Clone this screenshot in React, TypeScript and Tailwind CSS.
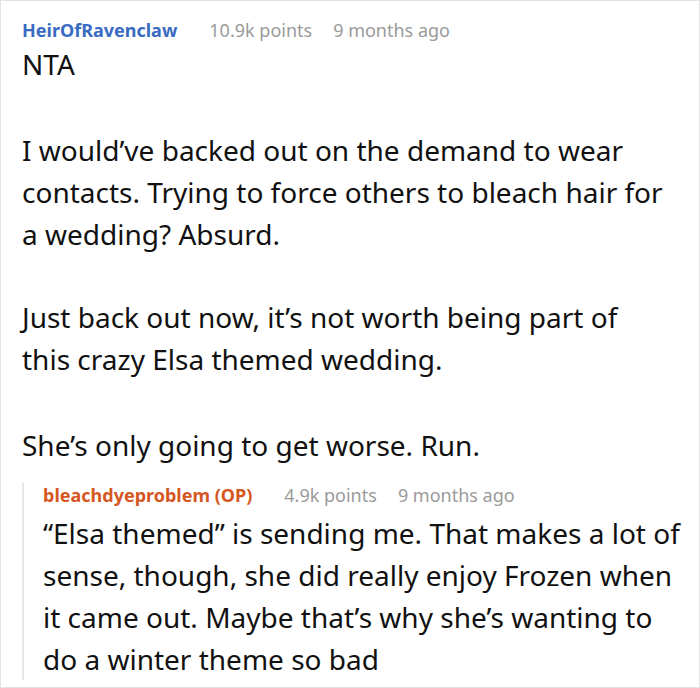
type Comment = {
  author: string;
  points: string;
  age: string;
  paragraphs: string[];
};

const topComment: Comment = {
  author: 'HeirOfRavenclaw',
  points: '10.9k points',
  age: '9 months ago',
  paragraphs: [
    'NTA',
    'I would’ve backed out on the demand to wear contacts. Trying to force others to bleach hair for a wedding? Absurd.',
    'Just back out now, it’s not worth being part of this crazy Elsa themed wedding.',
    'She’s only going to get worse. Run.',
  ],
};

const reply: Comment = {
  author: 'bleachdyeproblem (OP)',
  points: '4.9k points',
  age: '9 months ago',
  paragraphs: [
    '“Elsa themed” is sending me. That makes a lot of sense, though, she did really enjoy Frozen when it came out. Maybe that’s why she’s wanting to do a winter theme so bad',
  ],
};

const gaps = ['mt-[1px]', 'mt-[44px]', 'mt-[41px]', 'mt-[44px]'];

function CommentMeta({ author, points, age, authorClass }: { author: string; points: string; age: string; authorClass: string }) {
  return (
    <div className="flex items-baseline text-[18px] leading-[24px]">
      <span className={`font-bold ${authorClass}`}>{author}</span>
      <span className="ml-[32px] text-[#9a9a9a]">{points}</span>
      <span className="ml-[21px] text-[#9a9a9a]">{age}</span>
    </div>
  );
}

export default function App() {
  return (
    <div
      className="h-[688px] w-[700px] overflow-hidden border border-[#e3e3e3] bg-white pl-[21px] pr-[12px] pt-[17px] text-[#111]"
      style={{ fontFamily: '"Noto Sans", "Open Sans", sans-serif' }}
    >
      <CommentMeta {...topComment} authorClass="text-[#3a6bc2]" />
      <div className="pr-[20px] text-[28px] leading-[42px]">
        {topComment.paragraphs.map((p, i) => (
          <p key={i} className={gaps[i]}>
            {p}
          </p>
        ))}
      </div>

      <div className="mt-[17px] border-l-2 border-[#e6e6e6] pl-[19px]">
        <CommentMeta {...reply} authorClass="text-[#d5571f]" />
        <div className="mt-[5px] text-[28px] leading-[42px]">
          {reply.paragraphs.map((p, i) => (
            <p key={i}>{p}</p>
          ))}
        </div>
      </div>
    </div>
  );
}
